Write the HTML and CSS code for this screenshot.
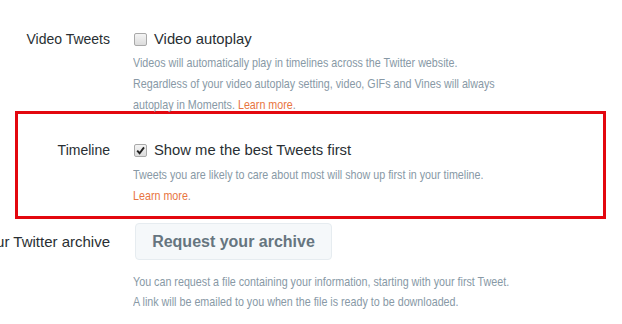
FILE: index.html
```html
<!DOCTYPE html>
<html>
<head>
<meta charset="utf-8">
<link rel="stylesheet" href="styles.css">
</head>
<body>
<div class="page">
  <div class="row row-video">
    <div class="label">Video Tweets</div>
    <div class="content">
      <div class="check-line"><span class="cb"></span><span class="cb-text">Video autoplay</span></div>
      <p class="desc">Videos will automatically play in timelines across the Twitter website.<br>Regardless of your video autoplay setting, video, GIFs and Vines will always<br>autoplay in Moments. <a class="link">Learn more</a>.</p>
    </div>
  </div>
  <div class="highlight">
    <div class="row row-inner">
      <div class="label">Timeline</div>
      <div class="content">
        <div class="check-line"><span class="cb checked"><svg viewBox="0 0 13 13" width="13" height="13"><path d="M3.2 6.6 L5.6 9.2 L10 3.4" fill="none" stroke="#222" stroke-width="1.9"/></svg></span><span class="cb-text">Show me the best Tweets first</span></div>
        <p class="desc desc-timeline">Tweets you are likely to care about most will show up first in your timeline.<br><a class="link">Learn more</a>.</p>
      </div>
    </div>
  </div>
  <div class="row row-archive">
    <div class="label">Your Twitter archive</div>
    <div class="content">
      <button class="btn">Request your archive</button>
      <p class="desc desc-archive">You can request a file containing your information, starting with your first Tweet.<br>A link will be emailed to you when the file is ready to be downloaded.</p>
    </div>
  </div>
</div>
</body>
</html>
```
FILE: styles.css
```css
html, body {
  margin: 0;
  padding: 0;
  background: #fff;
  overflow: hidden;
}
.page {
  font-family: "Liberation Sans", Arial, sans-serif;
  color: #292f33;
  padding-top: 29px;
  width: 622px;
}
.row {
  display: grid;
  grid-template-columns: 110px 1fr;
  column-gap: 23px;
}
.label {
  display: flex;
  justify-content: flex-end;
  align-items: center;
  height: 20px;
  white-space: nowrap;
  font-size: 14px;
  line-height: 20px;
  color: #292f33;
}
.content {
  min-width: 0;
}
.check-line {
  display: flex;
  align-items: center;
  height: 20px;
}
.cb {
  width: 11px;
  height: 11px;
  border: 1px solid #a9a9a9;
  border-radius: 2px;
  background: linear-gradient(#f4f4f4, #dcdcdc);
  margin-left: 1px;
  margin-right: 7px;
  display: flex;
  align-items: center;
  justify-content: center;
  flex: none;
}
.cb svg {
  display: block;
  margin: -1px;
}
.cb-text {
  font-size: 14.8px;
  line-height: 20px;
  color: #292f33;
}
.desc {
  margin: 3px 0 0;
  font-family: "Liberation Sans", Arial, sans-serif;
  font-size: 13px;
  line-height: 21px;
  color: #8899a6;
  white-space: nowrap;
  transform: scaleX(0.825);
  transform-origin: 0 0;
}
.desc-timeline {
  margin-top: 4px;
}
.link {
  color: #e8753f;
  text-decoration: none;
}
.highlight {
  margin: -4px 16px 0 15px;
  border: 3px solid #e3070f;
  padding: 26px 0 10px;
}
.row-inner {
  grid-template-columns: 92px 1fr;
}
.row-archive {
  margin-top: 4px;
}
.row-archive .label {
  height: 37px;
  font-size: 15px;
}
.btn {
  display: block;
  width: 197px;
  height: 37px;
  margin-left: 2px;
  background: #f5f8fa;
  border: 1px solid #e6ecf0;
  border-radius: 4px;
  font-family: "Liberation Sans", Arial, sans-serif;
  font-weight: bold;
  font-size: 16px;
  color: #66757f;
  padding: 0;
}
.desc-archive {
  margin-top: 12px;
  line-height: 20px;
}
```
